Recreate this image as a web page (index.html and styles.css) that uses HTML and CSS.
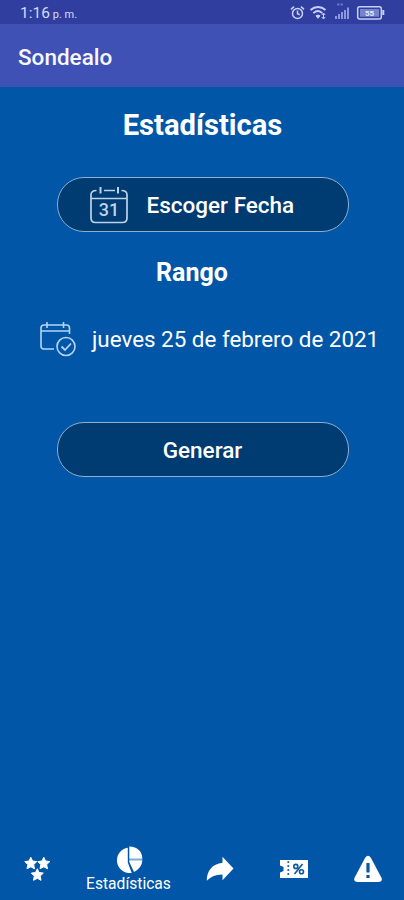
FILE: index.html
```html
<!DOCTYPE html>
<html lang="es">
<head>
<meta charset="utf-8">
<meta name="viewport" content="width=device-width, initial-scale=1">
<title>Sondealo</title>
<link rel="stylesheet" href="styles.css">
</head>
<body>
<div class="app">
  <div class="status">
    <div class="time">1:16 <small>p. m.</small></div>
    <svg class="status-icons" width="100" height="24" viewBox="0 0 100 24" fill="none" stroke="#c9d0f5">
      <g stroke-width="1.5"><circle cx="7.5" cy="13.5" r="5"/><path d="M7.5 10.5v3.2l2.3 1M1 9.4l3-2.8M14 9.4l-3-2.8"/></g>
      <g stroke-width="1.8"><path d="M20.5 10c4.5-4 10.500-4 15 0M23.300 13.200c3-2.700 6.500-2.700 9 0"/><path d="M26 15.800q2-1.500 4 0l-2 2.500z" fill="#c9d0f5" stroke-width="1"/></g>
      <path d="M33.500 13.500v5M31.800 15l1.700-2 1.700 2M31.800 17l1.700 2 1.700-2" stroke-width="1"/>
      <g stroke="#8d97dc" stroke-width="2"><path d="M46 19v-3M49 19v-5M52 19v-7M55 19v-9M58 19V7.500"/></g>
      <path d="M47 4.500h6" stroke="#6874c6" stroke-width="2" stroke-dasharray="2.500 1"/>
      <rect x="67.700" y="6.700" width="23.600" height="12.300" rx="2" stroke-width="1.500"/>
      <path d="M93.300 10v5" stroke-width="2"/>
      <rect x="70" y="9" width="19" height="7.700" fill="#7883cf" stroke="none"/>
      <text class="charge" x="79.500" y="16" text-anchor="middle">55</text>
    </svg>
  </div>
  <header class="bar">Sondealo</header>
  <main>
    <h1>Estadísticas</h1>
    <button class="pill date" type="button">
      <svg width="38" height="38" viewBox="0 0 38 38" fill="none" stroke="#bdd3e9" stroke-width="1.700">
        <path d="M6.500 4.500Q1 4.500 1 9v23q0 4.500 4.500 4.500h27q4.500 0 4.500-4.500V9q0-4.500-5.500-4.500M14 4.500h11M1 12.500h36"/>
        <path d="M10.500 1v6.500M28 1v6.500" stroke-width="2"/>
        <text class="day" x="19" y="30" text-anchor="middle">31</text>
      </svg>
      <span>Escoger Fecha</span>
    </button>
    <h2>Rango</h2>
    <div class="range">
      <svg width="36" height="36" viewBox="0 0 36 36" fill="none" stroke="#b3d5f3" stroke-width="1.600">
        <path d="M14 28H4q-3 0-3-3V7q0-3 3-3h22.500q3 0 3 3v6M1 10h28.500M7 1v6M23.500 1v6"/>
        <circle cx="26" cy="25.500" r="9"/>
        <path d="M21.500 25.500l3.500 3.500 6-6.500" stroke-width="1.800"/>
      </svg>
      <span>jueves 25 de febrero de 2021</span>
    </div>
    <button class="pill generate" type="button"><span>Generar</span></button>
  </main>
  <nav>
    <a class="stars"><svg width="27" height="26" viewBox="0 0 27 26" fill="#fff" stroke="#fff" stroke-linejoin="round">
      <path id="star" d="M6.800 1.300l1.700 3.700 4.300.600-3.100 3 .800 4.200-3.700-2L3 12.800l.800-4.200L.800 5.600 5 5z"/>
      <use href="#star" x="13"/><use href="#star" x="6.500" y="11.500"/></svg></a>
    <a class="active"><svg width="30" height="28" viewBox="0 0 30 28" fill="#fff">
      <path d="M13.800 1.800A13 12.700 0 0 0 15 27h2.700l-3.900-10.500zM15.300.4q12.400.6 13.100 12.300H15.300zM15.300 14.300h13.100q-.4 7.500-8.400 11.800l-4.700-10z"/>
      <path d="M15.300 13.500h13" stroke="#7eacd6"/></svg><span>Estadísticas</span></a>
    <a><svg width="28" height="26" viewBox="0 0 28 26" fill="#fff"><path d="M16.500.8 27.500 12.500l-11 11.700v-5.800Q7 18.200.7 24.800 1 9 16.500 6.700z"/></svg></a>
    <a><svg width="28" height="20" viewBox="0 0 28 20"><path fill="#fff" d="M0 1h28v18H0v-5.500l3.500-1.500V8L0 6.500z"/><path d="M8.300 2v16" stroke="#2768a7" stroke-width="1.700" stroke-dasharray="2 2"/><g fill="none" stroke="#0b559d" stroke-width="1.600"><circle cx="15.800" cy="7.400" r="2"/><circle cx="21.500" cy="12.800" r="2"/><path d="M22.500 5l-8 10"/></g></svg></a>
    <a><svg width="30" height="28" viewBox="0 0 30 28"><path fill="#fff" d="M12 3q3-4.500 6 0l10.300 19.500q1.800 4-3 4.500H4.700q-4.800-.5-3-4.500z"/><path d="M15 8v9.500M15 20v3" stroke="#0757a6" stroke-width="3.200"/></svg></a>
  </nav>
</div>
</body>
</html>
```
FILE: styles.css
```css
* { box-sizing: border-box; }
body { margin: 0; background: #0256a7; color: #fff; font-family: Roboto, sans-serif; }
.app { width: 404px; height: 900px; display: flex; flex-direction: column; overflow: hidden; }
.status { height: 24px; flex: none; background: #303f9f; display: flex; justify-content: space-between; padding: 0 14px 0 20px; color: #d5dbfa; }
.time { font-size: 15.5px; line-height: 27px; white-space: nowrap; }
.time small { font-size: 11px; margin-left: -1px; }
.status-icons { display: block; }
.charge { font: bold 8px Roboto, sans-serif; fill: #e6eaff; stroke: none; }
.day { font: 500 18px Roboto, sans-serif; fill: #bdd3e9; stroke: none; }
.bar { height: 63px; flex: none; background: #4051b5; padding-left: 18px; line-height: 67px; font-size: 22.500px; font-weight: 500; color: #f7f8ff; }
main { flex: 1; display: flex; flex-direction: column; align-items: center; padding-left: 1px; }
h1 { margin: 19px 0 0; font-size: 29.200px; line-height: 38px; font-weight: 700; }
.pill { width: 292px; height: 55px; flex: none; border: 1px solid #8cafd2; border-radius: 27px; background: #003b71; color: #fff; font: 500 22.500px Roboto, sans-serif; display: flex; align-items: center; justify-content: center; padding: 1px 0 0; }
.date { margin-top: 33px; justify-content: flex-start; padding-left: 32px; gap: 19px; }
h2 { margin: 24px 0 0; padding-right: 21px; font-size: 25px; line-height: 34px; font-weight: 700; }
.range { width: 100%; margin-top: 31px; padding-left: 39px; display: flex; align-items: center; gap: 16px; font-size: 22.400px; line-height: 36px; white-space: nowrap; }
.generate { margin-top: 65px; }
nav { height: 62px; flex: none; display: grid; grid-template-columns: 75px 107px 75px 74px 74px; }
nav a { display: flex; align-items: center; justify-content: center; }
nav a.active { flex-direction: column; justify-content: flex-start; padding-top: 8px; }
nav span { font-size: 15.600px; line-height: 20px; }
```
